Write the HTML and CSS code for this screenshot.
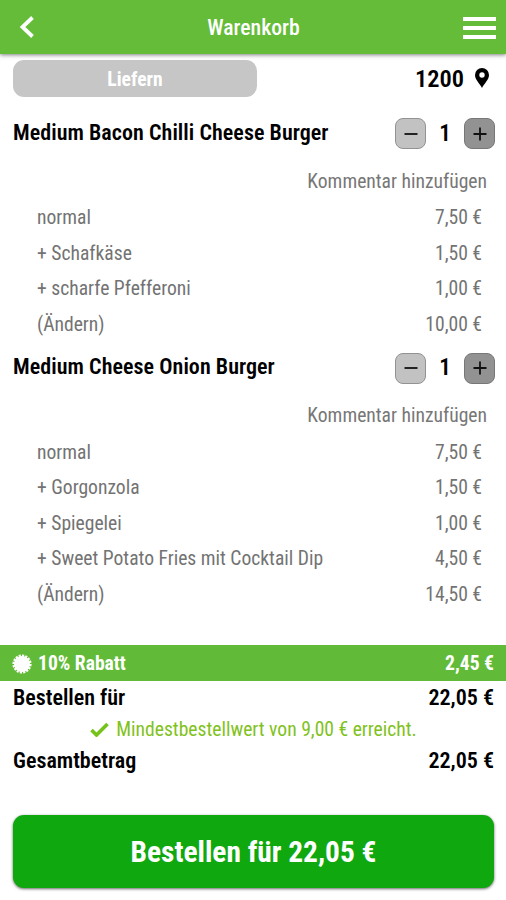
FILE: index.html
```html
<!DOCTYPE html>
<html lang="de">
<head>
  <meta charset="UTF-8">
  <meta name="viewport" content="width=device-width, initial-scale=1.0">
  <title>Warenkorb</title>
  <link rel="stylesheet" href="styles.css">
</head>
<body>

  <header class="topbar">
    <svg class="back" viewBox="0 0 16 24"><path d="M13.500 2.500 L3.500 12 L13.500 21.500"/></svg>
    <h1>Warenkorb</h1>
    <div class="menu"><span></span><span></span><span></span></div>
  </header>

  <div class="delivery">
    <div class="mode">Liefern</div>
    <div class="zip">
      <span>1200</span>
      <svg class="pin" viewBox="0 0 14 20"><path fill-rule="evenodd" d="M7 0a7 7 0 0 0-7 7c0 4.800 4.800 8.500 7 13 2.200-4.500 7-8.200 7-13a7 7 0 0 0-7-7zm0 4.300a2.700 2.700 0 1 1 0 5.400 2.700 2.700 0 0 1 0-5.400z"/></svg>
    </div>
  </div>

  <section class="item">
    <div class="item-head">
      <h2>Medium Bacon Chilli Cheese Burger</h2>
      <div class="amount">
        <button class="minus"><svg viewBox="0 0 14 14"><path d="M0.500 7h13"/></svg></button>
        <span>1</span>
        <button class="plus"><svg viewBox="0 0 14 14"><path d="M0.500 7h13M7 0.500v13"/></svg></button>
      </div>
    </div>
    <div class="comment">Kommentar hinzufügen</div>
    <div class="row"><span>normal</span><span>7,50 €</span></div>
    <div class="row"><span>+ Schafkäse</span><span>1,50 €</span></div>
    <div class="row"><span>+ scharfe Pfefferoni</span><span>1,00 €</span></div>
    <div class="row"><span>(Ändern)</span><span>10,00 €</span></div>
  </section>

  <section class="item">
    <div class="item-head">
      <h2>Medium Cheese Onion Burger</h2>
      <div class="amount">
        <button class="minus"><svg viewBox="0 0 14 14"><path d="M0.500 7h13"/></svg></button>
        <span>1</span>
        <button class="plus"><svg viewBox="0 0 14 14"><path d="M0.500 7h13M7 0.500v13"/></svg></button>
      </div>
    </div>
    <div class="comment">Kommentar hinzufügen</div>
    <div class="row"><span>normal</span><span>7,50 €</span></div>
    <div class="row"><span>+ Gorgonzola</span><span>1,50 €</span></div>
    <div class="row"><span>+ Spiegelei</span><span>1,00 €</span></div>
    <div class="row"><span>+ Sweet Potato Fries mit Cocktail Dip</span><span>4,50 €</span></div>
    <div class="row"><span>(Ändern)</span><span>14,50 €</span></div>
  </section>

  <div class="discount">
    <svg class="badge" viewBox="-10 -10 20 20"><circle r="8"/><circle class="teeth" r="8.200" pathLength="32"/></svg>
    <span class="label">10% Rabatt</span>
    <span>2,45 €</span>
  </div>

  <div class="sum"><span>Bestellen für</span><span>22,05 €</span></div>
  <div class="hint">
    <svg viewBox="0 0 19 15"><path d="M1.500 8l5 5L17.500 2"/></svg>
    <span>Mindestbestellwert von 9,00 € erreicht.</span>
  </div>
  <div class="sum"><span>Gesamtbetrag</span><span>22,05 €</span></div>

  <button class="order">Bestellen für 22,05 €</button>

</body>
</html>
```
FILE: styles.css
```css
* {
  box-sizing: border-box;
}
body {
  margin: 0;
  height: 900px;
  display: flex;
  flex-direction: column;
  background: #fff;
  color: #000;
  font-family: "Roboto Condensed", Roboto, sans-serif;
  font-stretch: 75%;
  font-size: 19.6px;
  line-height: 24px;
  overflow: hidden;
}
h1, h2 {
  margin: 0;
  font-size: 22px;
}
button {
  padding: 0;
  font: inherit;
}
.topbar {
  height: 54px;
  flex: none;
  display: flex;
  align-items: center;
  justify-content: space-between;
  padding: 0 10px 0 19px;
  background: #64bc38;
  color: #fff;
  box-shadow: 0 1px 4px rgba(0,0,0,0.5);
}
.topbar h1 {
  font-size: 21.7px;
  font-weight: 500;
  margin: 2px 0 0 9px;
}
.back {
  width: 16px;
  height: 24px;
  fill: none;
  stroke: #fff;
  stroke-width: 3.8;
}
.menu {
  width: 33px;
  margin-top: 1px;
  display: flex;
  flex-direction: column;
  gap: 5px;
}
.menu span {
  height: 4px;
  background: #fff;
}
.delivery {
  height: 37px;
  flex: none;
  margin: 6px 17px 18.5px 13px;
  display: flex;
  align-items: center;
  justify-content: space-between;
}
.mode {
  width: 244px;
  height: 37px;
  line-height: 39px;
  border-radius: 11px;
  background: #c6c6c6;
  color: #fff;
  font-weight: 700;
  text-align: center;
}
.zip {
  display: flex;
  align-items: center;
  gap: 11px;
  font-size: 24.4px;
  font-weight: 600;
}
.pin {
  width: 14px;
  height: 20px;
  margin-bottom: 2px;
}
.item {
  flex: none;
  margin-bottom: 8.5px;
}
.item-head {
  height: 36px;
  padding: 0 11px 0 13px;
  display: flex;
  align-items: center;
  justify-content: space-between;
}
.item-head h2 {
  font-weight: 600;
  margin-bottom: 2px;
  letter-spacing: 0.05px;
}
.amount {
  display: flex;
  align-items: center;
  font-size: 23px;
  font-weight: 600;
}
.amount span {
  width: 38px;
  text-align: center;
}
.amount button {
  width: 31px;
  height: 31px;
  display: flex;
  align-items: center;
  justify-content: center;
  border: 1px solid #929292;
  border-radius: 8px;
  background: #c2c2c2;
}
.amount .plus {
  border-color: #777;
  background: #929292;
}
.amount svg {
  width: 14px;
  height: 14px;
  stroke: #111;
  stroke-width: 1.8;
}
.comment {
  height: 48px;
  padding: 18px 19px 0 0;
  text-align: right;
  color: #777;
}
.row {
  height: 35.5px;
  padding: 2px 24px 0 37px;
  display: flex;
  align-items: center;
  justify-content: space-between;
  color: #737373;
}
.discount {
  height: 36px;
  flex: none;
  margin-top: 25px;
  padding: 1px 12px 0;
  display: flex;
  align-items: center;
  background: #62bb38;
  color: #fff;
  font-weight: 700;
}
.badge {
  width: 20px;
  height: 20px;
  margin-right: 6px;
  fill: #fff;
}
.badge .teeth {
  fill: none;
  stroke: #fff;
  stroke-width: 2.8;
  stroke-dasharray: 1.3 0.7;
}
.label {
  flex: 1;
}
.sum {
  height: 32px;
  flex: none;
  padding: 1px 12px 0 13px;
  display: flex;
  align-items: center;
  justify-content: space-between;
  font-size: 22px;
  font-weight: 600;
}
.hint {
  height: 31px;
  flex: none;
  padding: 2px 0 0 1px;
  display: flex;
  align-items: center;
  justify-content: center;
  gap: 7px;
  color: #7fc21c;
}
.hint svg {
  width: 19px;
  height: 15px;
  fill: none;
  stroke: #74c21a;
  stroke-width: 3.6;
}
.order {
  height: 73px;
  flex: none;
  margin: 39px 12px 0 13px;
  border: 0;
  border-radius: 11px;
  background: #0fa80f;
  color: #fff;
  font-size: 29.4px;
  font-weight: 700;
  box-shadow: 0 1px 3px rgba(0,0,0,0.6);
}
```
